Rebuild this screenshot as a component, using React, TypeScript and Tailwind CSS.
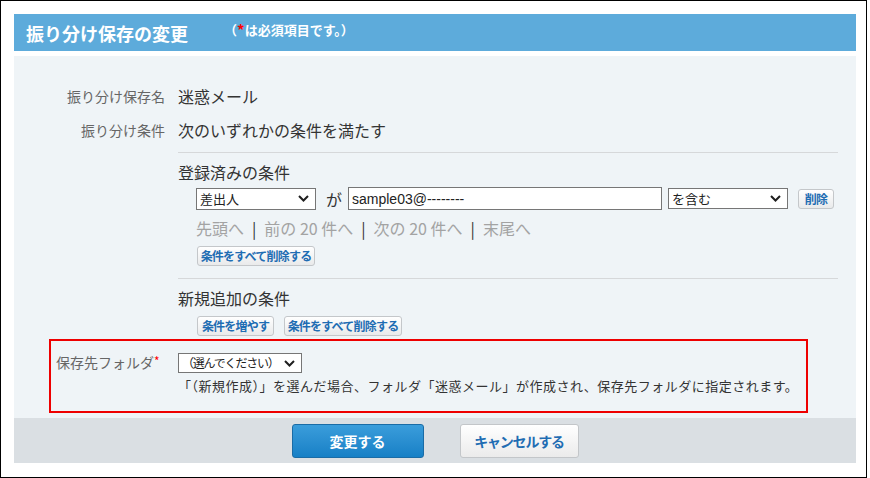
import React from 'react';

const jp = "font-['Noto_Sans_CJK_JP','Noto_Sans',sans-serif]";

function Chevron() {
  return (
    <svg width="11" height="7" viewBox="0 0 11 7" className="shrink-0">
      <path d="M1 1l4.5 4.5L10 1" fill="none" stroke="#1f1f1f" strokeWidth="2" />
    </svg>
  );
}

function FakeSelect({ value, className = '', textClass = '' }: { value: string; className?: string; textClass?: string }) {
  return (
    <div
      className={`flex items-center justify-between gap-[4px] bg-white border border-[#767676] pl-[3px] pr-[6px] text-[13px] leading-none text-[#222] whitespace-nowrap ${className}`}
    >
      <span className={textClass}>{value}</span>
      <Chevron />
    </div>
  );
}

function SmallButton({ children, className = '' }: { children: React.ReactNode; className?: string }) {
  return (
    <div
      className={`flex items-center justify-center h-[20px] rounded-[3px] border border-[#c4c7ca] bg-gradient-to-b from-white to-[#e9eaeb] text-[12px] font-bold tracking-[-0.8px] leading-none text-[#1f6db3] whitespace-nowrap ${className}`}
    >
      {children}
    </div>
  );
}

function Sep() {
  return <span className="mx-[8px] text-[#333]">|</span>;
}

export default function App() {
  return (
    <div className={`w-[867px] h-[478px] border border-black bg-white pl-[13px] pt-[13px] ${jp}`}>
      {/* header */}
      <div className="w-[842px] h-[37px] bg-[#5dabdb] flex items-center pl-[12px] text-white">
        <span className="text-[18px] font-bold leading-none">振り分け保存の変更</span>
        <span className="ml-[36px] text-[13px] font-bold leading-none -mt-[6px] whitespace-nowrap flex items-center">
          （<span className="text-[#ff0000] text-[15px]">*</span>は必須項目です。）
        </span>
      </div>

      {/* panel */}
      <div className="w-[842px] mt-[5px] h-[362px] bg-[#eff4f7] pt-[28px]">
        <div className="flex h-[24px] items-center">
          <div className="w-[151px] text-right text-[14px] text-[#666]">振り分け保存名</div>
          <div className="ml-[13px] text-[16px] text-[#333]">迷惑メール</div>
        </div>
        <div className="flex h-[24px] items-center mt-[10px]">
          <div className="w-[151px] text-right text-[14px] text-[#666]">振り分け条件</div>
          <div className="ml-[13px] text-[16px] text-[#333]">次のいずれかの条件を満たす</div>
        </div>

        <div className="ml-[164px] mr-[18px]">
          <div className="mt-[10px] h-px bg-[#d6d8da]" />
          <div className="mt-[7px] h-[24px] flex items-center text-[16px] text-[#333]">登録済みの条件</div>

          <div className="mt-[3px] ml-[18px] flex items-center">
            <FakeSelect value="差出人" className="w-[120px] h-[22px]" />
            <span className="ml-[10px] text-[16px] text-[#333] leading-none">が</span>
            <div className="ml-[6px] w-[314px] h-[23px] bg-white border border-[#767676] flex items-center pl-[3px] text-[14px] text-[#222] leading-none font-['Liberation_Sans',sans-serif]">
              sample03@--------
            </div>
            <FakeSelect value="を含む" className="ml-[6px] w-[120px] h-[21px]" />
            <SmallButton className="ml-[10px] w-[36px]">削除</SmallButton>
          </div>

          <div className="mt-[6px] ml-[18px] h-[24px] flex items-center text-[16px] text-[#a3a3a3] leading-none whitespace-pre">
            <span>先頭へ</span>
            <Sep />
            <span>前の 20 件へ</span>
            <Sep />
            <span>次の 20 件へ</span>
            <Sep />
            <span>末尾へ</span>
          </div>

          <div className="mt-[6px] ml-[19px] flex">
            <SmallButton className="w-[118px]">条件をすべて削除する</SmallButton>
          </div>

          <div className="mt-[12px] h-px bg-[#d6d8da]" />
          <div className="mt-[7px] h-[24px] flex items-center text-[16px] text-[#333]">新規追加の条件</div>
          <div className="mt-[6px] ml-[19px] flex gap-[10px]">
            <SmallButton className="w-[77px]">条件を増やす</SmallButton>
            <SmallButton className="w-[118px]">条件をすべて削除する</SmallButton>
          </div>
        </div>

        {/* required folder box */}
        <div className="mt-[3px] ml-[35px] w-[759px] h-[74px] border-2 border-[#ee0000] pl-[5px] pt-[12px] flex">
          <div className="w-[122px] text-[14px] text-[#666] leading-none pt-[2px] whitespace-nowrap">
            保存先フォルダ<span className="text-[#ff0000] text-[12px] align-top">*</span>
          </div>
          <div>
            <FakeSelect
              value="（選んでください）"
              className="w-[124px] h-[20px] pl-[2px] pr-[5px]"
              textClass="text-[12px] tracking-[-1.2px]"
            />
            <div className="mt-[6px] text-[13px] text-[#333] leading-none tracking-[0.5px] whitespace-nowrap">
              「（新規作成）」を選んだ場合、フォルダ「迷惑メール」が作成され、保存先フォルダに指定されます。
            </div>
          </div>
        </div>
      </div>

      {/* footer */}
      <div className="w-[842px] h-[45px] bg-[#dadfe3] flex items-center justify-center gap-[36px]">
        <div className="w-[132px] h-[34px] rounded-[3px] border border-[#1a6ca6] bg-gradient-to-b from-[#3a9ddb] to-[#1680c6] flex items-center justify-center text-white text-[14px] font-bold leading-none">
          変更する
        </div>
        <div className="w-[119px] h-[34px] rounded-[3px] border border-[#c3c6c9] bg-gradient-to-b from-white to-[#ebebeb] flex items-center justify-center text-[#1f6db3] text-[14px] font-bold tracking-[-1.2px] leading-none">
          キャンセルする
        </div>
      </div>
    </div>
  );
}
